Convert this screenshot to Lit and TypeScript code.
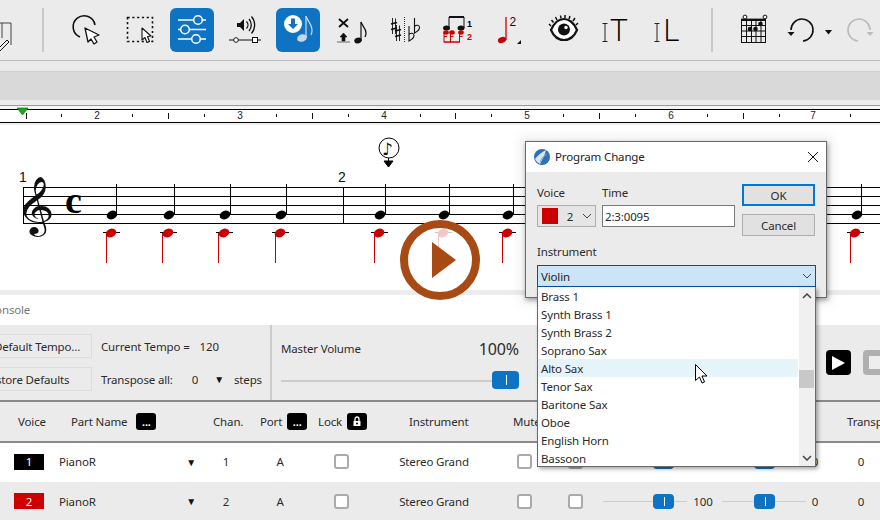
import { LitElement, html, css, svg } from "lit";
import { customElement } from "lit/decorators.js";

const B = "#0f73c3";
const ibeam = (x: number) => svg`<path d="M${x - 2.5} 15.5h5M${x - 2.5} 33.5h5M${x} 15.5v18" fill="none" stroke="#222" stroke-width="1"/>`;
const sharp = (x: number, y: number) => svg`<path d="M${x - 1.5} ${y - 8}v16M${x + 1.5} ${y - 7.500}v15.500" stroke="#111" stroke-width=".9"/><path d="M${x - 3} ${y - 2}l6-1.500M${x - 3} ${y + 3.500}l6-1.500" stroke="#111" stroke-width="1.800"/>`;
const flat = (x: number, y: number) => svg`<path d="M${x} ${y - 10}v15c3-1.500 5-3.500 5-5.500 0-2.500-3-3-5-1" fill="none" stroke="#111" stroke-width="1.100"/>`;

const icons = {
  clip: svg`<path d="M6 15H33V37M12 15V34M24 15V30" fill="none" stroke="#444" stroke-width="1"/><path d="M20 41l9-9 2 2-9 9-3 1z" fill="none" stroke="#111" stroke-width="1"/>`,
  cursor: svg`<path d="M16 29A11 11 0 1 1 31 17" fill="none" stroke="#111" stroke-width="1.6"/><path d="M21 20L35 27L30 29L33 34L30 36L27 31L24 34Z" fill="#fff" stroke="#111" stroke-width="1.3" stroke-linejoin="round"/>`,
  marquee: svg`<rect x="10.5" y="9.5" width="25" height="24" fill="none" stroke="#111" stroke-width="1.6" stroke-dasharray="2.2 2.6"/><path d="M25 20l9 8-3.500 .5 2 5-2.500 1-2-5-3 2.500z" fill="#fff" stroke="#111" stroke-width="1.1" stroke-linejoin="round"/>`,
  sliders: svg`<path d="M8 12H36M8 21.500H36M8 31H36" stroke="#fff" stroke-width="1.300"/><g fill="${B}" stroke="#fff" stroke-width="1.500"><circle cx="28" cy="12" r="4.300"/><circle cx="15" cy="21.500" r="4.300"/><circle cx="26" cy="31" r="4.300"/></g>`,
  speaker: svg`<path d="M14 15h3l4-4v12l-4-4h-3z" fill="#111"/><path d="M23.500 13.500a5 5 0 0 1 0 7M26 11a9 9 0 0 1 0 12M28.500 8.500a13 13 0 0 1 0 17" fill="none" stroke="#111" stroke-width="1.300"/><path d="M6 32H38" stroke="#111" stroke-width="1"/><circle cx="13" cy="32" r="2.300" fill="#fff" stroke="#111"/><rect x="29.500" y="29.500" width="5" height="5" fill="#fff" stroke="#111"/>`,
  noteIn: svg`<path d="M30 8v22" stroke="#c7d6e6" stroke-width="1.300"/><path d="M30 8c1 5 6 7 6 14 0 2-.5 4-1 5" fill="none" stroke="#c7d6e6" stroke-width="1.300"/><ellipse cx="26" cy="30" rx="5" ry="3.600" fill="#c7d6e6" transform="rotate(-20 26 30)"/><circle cx="17" cy="16" r="9" fill="#fff"/><path d="M15 10.500h4V16h3l-5 5-5-5h3z" fill="${B}"/>`,
  xnote: svg`<path d="M10 11l9 8M19 11l-9 8" stroke="#111" stroke-width="1.800"/><path d="M14.500 25l3.500 4h-2v4h-3v-4h-2zM8 34h13" fill="#111" stroke="#111" stroke-width=".6"/><path d="M32 14v19" stroke="#111" stroke-width="1.200"/><path d="M32 14c1 4 5 6 5 11 0 2-.5 3-1 4" fill="none" stroke="#111" stroke-width="1.300"/><ellipse cx="29" cy="32.500" rx="3.800" ry="2.800" fill="#111" transform="rotate(-20 29 32.500)"/>`,
  accid: svg`${sharp(12, 18)}${sharp(16, 25)}<path d="M22.500 9v26" stroke="#333" stroke-width="1" stroke-dasharray="1 1"/>${flat(27, 28)}${flat(32.5, 20)}`,
  voices: svg`<path d="M14 9v11M29 9v11" stroke="#111" stroke-width="1"/><path d="M14 9h15" stroke="#111" stroke-width="2"/><ellipse cx="11.500" cy="20" rx="3.500" ry="2.500" fill="#111"/><ellipse cx="26" cy="20" rx="3.500" ry="2.500" fill="#111"/><text x="32" y="19" class="b" font-size="9">1</text><g fill="#c00"><ellipse cx="11" cy="24.500" rx="2.800" ry="2.200"/><ellipse cx="17" cy="24.500" rx="2.800" ry="2.200"/><ellipse cx="26" cy="24.500" rx="2.800" ry="2.200"/></g><path d="M9 25v9.500M15.500 25v9.500M24.500 25v9.500" stroke="#c00" stroke-width="1"/><path d="M9 34H24.500" stroke="#c00" stroke-width="1.500"/><path d="M9 28.500h3M15.500 28.500h3M24.500 28.500h3" stroke="#c00" stroke-width="1"/><text x="32" y="32" class="b" font-size="9" fill="#c00">2</text>`,
  note2: svg`<path d="M18 9v23" stroke="#c00" stroke-width="1.300"/><ellipse cx="14" cy="32" rx="4.200" ry="3" fill="#c00" transform="rotate(-20 14 32)"/><text x="21.500" y="18" class="t" font-size="12">2</text><path d="M33 32v4h-4z" fill="#111"/>`,
  eye: svg`<path d="M10 22c4-9 9-11 13-11s10 3 13 11c-3 7-8 10-13 10s-10-3-13-10z" fill="#fff" stroke="#111" stroke-width="2.200"/><circle cx="23" cy="21.500" r="6" fill="#111"/><circle cx="25" cy="19.500" r="1.700" fill="#fff"/><path d="M10 18l-2-2M12.500 14.500l-2-2.500M16 12l-1.500-3M20 10.500l-.5-3M24 10v-3M28 11l1-3M32 13l2-3M35 17l2-2" stroke="#111" stroke-width="1.500"/>`,
  it: svg`${ibeam(11)}<text x="16.500" y="33" class="big" font-size="32">T</text>`,
  il: svg`${ibeam(10)}<text x="16" y="33" class="big" font-size="32">L</text>`,
  chord: svg`<g stroke="#111" stroke-width="1"><rect x="10.500" y="12.500" width="24" height="22" fill="none"/><path d="M10 11.500h25" stroke-width="1.800"/><path d="M15.500 12v22M20.500 12v22M25 12v22M30 12v22M10 17.500h25M10 23h25M10 28.500h25"/></g><circle cx="14" cy="9" r="1.900" fill="#fff" stroke="#111"/><circle cx="34" cy="9" r="1.900" fill="#fff" stroke="#111"/><g fill="#111"><circle cx="19" cy="21" r="2.300"/><circle cx="24.500" cy="21" r="2.300"/><circle cx="29.500" cy="16" r="2.300"/></g>`,
  undo: svg`<path d="M13 22A11 11 0 1 1 25 33" fill="none" stroke="#111" stroke-width="1.600"/><path d="M9.500 24h7l-3.500 4z" fill="#111"/>`,
  redo: svg`<path d="M31 22A11 11 0 1 0 19 33" fill="none" stroke="#bbb" stroke-width="1.600"/><path d="M27.500 24h7l-3.500 4z" fill="#bbb"/>`,
};

const ic = (p: unknown, w = 44, cls = "") => html`<div class="ic ${cls}"><svg width="${w}" height="44" viewBox="0 0 ${w} 44">${p}</svg></div>`;

const rulerTicks = [26, 168, 312, 455, 599, 743];
const labels: [number, string][] = [[97, "2"], [240, "3"], [384, "4"], [527, "5"], [671, "6"], [813, "7"]];
const shortTicks = [61, 132, 204, 276, 348, 420, 491, 563, 635, 707, 779, 850];

const blackNotes = [[112, 116], [169, 174], [225, 230], [281, 286], [380, 385], [444, 449], [508, 513], [857, 861]];
const redNotes = [[111, 106], [168, 162], [224, 218], [280, 275], [379, 374], [443, 438], [507, 502], [855, 850]];
const Y0 = 125;

const items = ["Brass 1", "Synth Brass 1", "Synth Brass 2", "Soprano Sax", "Alto Sax", "Tenor Sax", "Baritone Sax", "Oboe", "English Horn", "Bassoon"];

@customElement("app-root")
export class AppRoot extends LitElement {
  static styles = css`
    :host { display: block; position: relative; width: 880px; height: 520px; overflow: hidden; background: #ebebeb; font: 11.5px "Noto Sans", sans-serif; letter-spacing: -.15px; color: #2b2b2b; }
    svg { display: block; }
    .mus { font-family: "DejaVu Sans", sans-serif; fill: #111; }
    .b { font-family: "Liberation Sans", sans-serif; font-weight: 700; letter-spacing: 0; }
    .t { font-family: "Liberation Sans", sans-serif; fill: #111; letter-spacing: 0; }
    .big { font-family: "Open Sans", sans-serif; font-weight: 300; fill: #000; letter-spacing: 0; }
    .cee { font: 700 38px "Liberation Serif", serif; fill: #000; letter-spacing: 0; }
    .toolbar { height: 60px; border-bottom: 1px solid #bbb; display: flex; align-items: center; gap: 9px; margin-left: -22px; }
    .ic { height: 44px; flex: none; border-radius: 6px; }
    .ic.on { background: #0f73c3; }
    .sep { width: 2px; height: 44px; background: #c8c8c8; flex: none; margin: 0 11px; }
    .sep.r { margin-right: 9px; }
    .tight { margin-right: -6px; }
    .caret { margin-left: -6px; margin-right: -6px; }
    .gap71 { height: 10px; border-bottom: 1px solid #d0d0d0; }
    .band { height: 28px; background: #d9d9d9; display: flex; align-items: center; }
    .band span { margin-left: -5px; }
    .gap105 { height: 5px; border-bottom: 1px solid #999; }
    .pre { height: 3px; background: #f4f4f4; }
    .ruler { background: #fff; border-top: 1px solid #000; border-bottom: 1px solid #000; height: 12px; }
    .ruler svg { overflow: visible; }
    .ruler text { font: 10px "Liberation Sans", sans-serif; fill: #222; letter-spacing: 0; }
    .post { height: 2px; background: #f0f0f0; }
    .score { background: #fff; height: 165px; }
    .band2 { height: 5px; background: #ececec; }
    .tab { height: 28px; padding-bottom: 2px; background: #fff; display: flex; align-items: center; color: #777; }
    .tab span { margin-left: -12px; }
    .panel { height: 75px; display: flex; border-bottom: 2px solid #8a8a8a; }
    .left { width: 270px; flex: none; border-right: 2px solid #ccc; padding-top: 9px; display: flex; flex-direction: column; gap: 9px; overflow: hidden; }
    .lrow { display: flex; align-items: center; height: 24px; }
    .btn { width: 110px; height: 24px; margin-left: -18px; box-sizing: border-box; border: 1px solid #ddd; background: #ebebeb; display: flex; align-items: center; justify-content: center; flex: none; margin-right: 9px; white-space: nowrap; }
    .btn.wide { width: 132px; margin-left: -40px; }
    .num { margin-left: 10px; }
    .tz { margin-left: 19px; }
    .dn { margin-left: 16px; font-size: 10px; color: #111; }
    .steps { margin-left: 10px; }
    .master { width: 238px; flex: none; margin-left: 9px; padding-top: 9px; box-sizing: border-box; }
    .mtop { display: flex; justify-content: space-between; align-items: center; height: 28px; }
    .pct { font-size: 16px; padding-top: 2px; }
    .track { position: relative; height: 2px; background: #ccc; }
    .mtrack { margin-top: 18px; height: 2px; }
    .thumb { position: absolute; top: -8px; height: 18px; width: 27px; border-radius: 4px; background: #0f73c3; }
    .thumb::after { content: ""; position: absolute; left: 50%; top: 4px; bottom: 4px; width: 1px; background: #fff; }
    .mtrack .thumb { right: 0; top: -9px; }
    .col2 { width: 260px; flex: none; margin-left: 19px; padding-top: 9px; }
    .col2 .track { margin-top: 18px; width: 100px; }
    .col2 .thumb { left: 0; top: -9px; }
    .tbtn { width: 25px; height: 25px; border-radius: 4px; background: #000; margin-top: 25px; margin-left: 28px; flex: none; display: flex; align-items: center; justify-content: center; }
    .tbtn.off { background: #b0b0b0; margin-left: 12px; }
    .tbtn.off i { width: 13px; height: 13px; background: #eee; display: block; }
    .thead { height: 39px; display: flex; align-items: center; padding-left: 18px; border-bottom: 2px solid #8a8a8a; }
    .thead > div { flex: none; display: flex; align-items: center; gap: 5px; white-space: nowrap; }
    .h1 { width: 53px; } .thead .h2 { width: 142px; gap: 9px; } .h3 { width: 47px; } .h4 { width: 58px; } .h5 { width: 91px; } .h6 { width: 104px; } .h7 { width: 334px; }
    .dots { width: 20px; height: 17px; border-radius: 3px; background: #000; color: #fff; font: 700 11px/12px "Liberation Sans", sans-serif; display: flex; align-items: center; justify-content: center; }
    .row { height: 37px; padding-bottom: 2px; display: grid; grid-template-columns: 45px 147px 40px 68px 54px 132px 48px 54px 86px 30px 92px 10px 82px; padding-left: 14px; align-items: center; justify-items: center; background: #fff; }
    .row.alt { background: #ebebeb; height: 38px; }
    .chip { justify-self: start; width: 30px; height: 16px; color: #fff; background: #000; display: flex; align-items: center; justify-content: center; }
    .chip.red { background: #c00; }
    .name { justify-self: stretch; display: flex; justify-content: space-between; align-items: center; padding-right: 10px; }
    .name i { font-style: normal; font-size: 10px; color: #111; }
    .cb { width: 15px; height: 15px; box-sizing: border-box; border: 2px solid #aaa; border-radius: 3px; background: #fff; }
    .row .track { width: 84px; height: 1px; background: #ccc; }
    .row .thumb { top: -7px; height: 15px; width: 21px; }
    .row .thumb::after { top: 3px; bottom: 3px; }
    .row .vol { left: 50px; }
    .row .pan { left: 32px; }
    .dlg { position: absolute; left: 525px; top: 141px; width: 302px; height: 157px; box-sizing: border-box; border: 1px solid #6a6a6a; background: #ebebeb; box-shadow: 1px 2px 5px rgba(0,0,0,.4), 0 0 10px 7px rgba(0,0,0,.045); }
    .title { height: 29px; padding-bottom: 1px; background: #fff; display: flex; align-items: center; padding-left: 8px; gap: 5px; }
    .title span { flex: 1; color: #222; }
    .title .x { margin-right: 7px; }
    .dbody { display: grid; grid-template-columns: 59px 133px; column-gap: 6px; position: relative; padding: 9px 0 0 11px; grid-template-rows: 24px 22px; align-items: center; }
    .dlabel { padding-bottom: 2px; }
    .combo { box-sizing: border-box; height: 22px; border: 1px solid #adadad; background: #e5e5e5; display: flex; align-items: center; padding-left: 4px; justify-content: space-between; padding-right: 3px; }
    .combo b { width: 16px; height: 16px; background: #c00; display: block; }
    .input { box-sizing: border-box; height: 22px; border: 1px solid #7a7a7a; background: #fff; padding-left: 2px; display: flex; align-items: center; }
    .dbtns { position: absolute; left: 216px; top: 12px; display: flex; flex-direction: column; gap: 8px; }
    .dbtn { width: 73px; height: 22px; box-sizing: border-box; border: 1px solid #adadad; background: #e1e1e1; display: flex; align-items: center; justify-content: center; }
    .dbtn.def { border: 2px solid #0078d7; }
    .ilabel { margin: 16px 0 0 11px; height: 17px; line-height: 17px; }
    .select { margin: 5px 0 0 11px; box-sizing: border-box; width: 279px; height: 22px; border: 1px solid #005499; background: #cce4f7; display: flex; align-items: center; justify-content: space-between; padding: 0 3px 0 3px; color: #222; }
    .list { position: absolute; left: 537px; top: 287px; width: 279px; height: 180px; box-sizing: border-box; border: 1px solid #6a6a6a; border-top: none; background: #fff; box-shadow: 2px 2px 4px rgba(0,0,0,.35); display: flex; overflow: hidden; }
    .opts { flex: 1; }
    .opt { height: 18px; line-height: 20px; padding-left: 3px; color: #2a2a2a; margin-right: 1px; }
    .opt.hi { background: #e5f3fb; }
    .sb { width: 16px; background: #f0f0f0; position: relative; flex: none; }
    .sb svg { position: absolute; left: 3px; }
    .sb .up { top: 6px; }
    .sb .down { bottom: 5px; }
    .sb i { position: absolute; left: 0; right: 1px; top: 83px; height: 18px; background: #c8c8c8; display: block; }
    .mouse { position: absolute; left: 695px; top: 364px; }
    .play { position: absolute; left: 400px; top: 220px; }
  `;

  row(n: string, alt: boolean) {
    return html`<div class="row ${alt ? "alt" : ""}">
      <div class="chip ${alt ? "red" : ""}">${n}</div>
      <div class="name"><span>PianoR</span><i>▼</i></div>
      <div>${n}</div><div>A</div><div class="cb"></div><div>Stereo Grand</div><div class="cb"></div><div class="cb"></div>
      <div class="track"><div class="thumb vol"></div></div><div>100</div>
      <div class="track"><div class="thumb pan"></div></div><div>0</div><div>0</div>
    </div>`;
  }

  render() {
    const chev = svg`<path d="M1 1l4 4 4-4" fill="none" stroke="#444" stroke-width="1"/>`;
    return html`
      <div class="toolbar">
        ${ic(icons.clip)}
        <div class="sep"></div>
        ${ic(icons.cursor)}${ic(icons.marquee)}${ic(icons.sliders, 44, "on")}${ic(icons.speaker)}${ic(icons.noteIn, 44, "on")}${ic(icons.xnote)}${ic(icons.accid)}${ic(icons.voices)}${ic(icons.note2)}${ic(icons.eye)}${ic(icons.it)}${ic(icons.il)}
        <div class="sep r"></div>
        ${ic(icons.chord, 44, "tight")}${ic(icons.undo)}
        ${ic(svg`<path d="M0 22h7l-3.500 4.500z" fill="#111"/>`, 11, "caret")}
        ${ic(icons.redo)}
      </div>
      <div class="gap71"></div>
      <div class="band"><span>1</span></div>
      <div class="gap105"></div>
      <div class="pre"></div>
      <div class="ruler">
        <svg width="880" height="12" viewBox="0 110 880 12">
          ${rulerTicks.map((x) => svg`<path d="M${x}.5 113v6" stroke="#111"/>`)}
          ${shortTicks.map((x) => svg`<path d="M${x}.5 114v3" stroke="#111"/>`)}
          ${labels.map(([x, t]) => svg`<text x="${x}" y="119" text-anchor="middle">${t}</text>`)}
          <path d="M17 108h11l-5.500 7z" fill="#1aa81a" stroke="#0a6a0a" stroke-width=".6"/>
        </svg>
      </div>
      <div class="post"></div>
      <div class="score">
        <svg width="880" height="165" viewBox="0 ${Y0} 880 165">
          <g stroke="#000" stroke-width="1">
            ${[187, 196, 205, 214, 223].map((y) => svg`<path d="M23 ${y}.5H880"/>`)}
            <path d="M23.500 187v37M343.500 187v37"/>
          </g>
          <text x="19" y="182" class="t" font-size="14">1</text>
          <text x="338" y="182" class="t" font-size="14">2</text>
          <text transform="translate(15 222) scale(1.35 1)" class="mus" font-size="50">𝄞</text>
          <text x="65" y="213" class="cee">c</text>
          ${blackNotes.map(([h, s]) => svg`<ellipse cx="${h}" cy="215" rx="5.500" ry="4.200" fill="#000" transform="rotate(-25 ${h} 215)"/><path d="M${s}.5 184v31" stroke="#000" stroke-width="1"/>`)}
          ${redNotes.map(([h, s]) => svg`<path d="M${h - 8} 232.500h17" stroke="#000"/><ellipse cx="${h}" cy="233" rx="5.500" ry="4.200" fill="#c00" transform="rotate(-25 ${h} 233)"/><path d="M${s}.5 233v30" stroke="#c00" stroke-width="1"/>`)}
          <circle cx="389" cy="148" r="10" fill="#fff" stroke="#000" stroke-width="1"/>
          <text x="382" y="155" class="mus" font-size="17">♪</text>
          <path d="M388.500 158v3M384 161h9l-4.500 6z" fill="#000" stroke="#000" stroke-width="1"/>
        </svg>
      </div>
      <div class="band2"></div>
      <div class="tab"><span>Console</span></div>
      <div class="panel">
        <div class="left">
          <div class="lrow"><div class="btn">Default Tempo...</div><span>Current Tempo =</span><span class="num">120</span></div>
          <div class="lrow"><div class="btn wide">Restore Defaults</div><span>Transpose all:</span><span class="tz">0</span><span class="dn">▼</span><span class="steps">steps</span></div>
        </div>
        <div class="master">
          <div class="mtop"><span>Master Volume</span><span class="pct">100%</span></div>
          <div class="track mtrack"><div class="thumb"></div></div>
        </div>
        <div class="col2"><div class="mtop"><span>Metronome</span></div><div class="track"><div class="thumb"></div></div></div>
        <div class="tbtn"><svg width="13" height="14"><path d="M0 0l13 7-13 7z" fill="#fff"/></svg></div>
        <div class="tbtn off"><i></i></div>
      </div>
      <div class="thead">
        <div class="h1">Voice</div>
        <div class="h2">Part Name <span class="dots">...</span></div>
        <div class="h3">Chan.</div>
        <div class="h4">Port <span class="dots">...</span></div>
        <div class="h5">Lock <span class="dots"><svg width="10" height="11"><path d="M3 5V3a2 2 0 0 1 4 0v2" fill="none" stroke="#fff" stroke-width="1.300"/><rect x="1.500" y="5" width="7" height="5" rx=".5" fill="#fff"/><circle cx="5" cy="7.500" r="1" fill="#000"/></svg></span></div>
        <div class="h6">Instrument</div>
        <div class="h7">Mute</div>
        <div>Transp</div>
      </div>
      ${this.row("1", false)}
      ${this.row("2", true)}

      <svg class="play" width="80" height="80" viewBox="0 0 80 80">
        <circle cx="40" cy="40" r="36" fill="rgba(255,255,255,.78)" stroke="#a84a14" stroke-width="8"/>
        <path d="M32 22l24 18-24 18z" fill="#a84a14"/>
      </svg>

      <div class="dlg">
        <div class="title">
          <svg width="16" height="16" viewBox="0 0 16 16"><circle cx="8" cy="8" r="8" fill="#2f6fb5"/><path d="M1 10C4 6 8 3 12 1c-1 5-4 10-6 14-2-1-4-3-5-5z" fill="#dbe6f3"/><path d="M8 9l5-4M6 13l2-4" stroke="#7ea3cd"/></svg>
          <span>Program Change</span>
          <svg class="x" width="12" height="12" viewBox="0 0 12 12"><path d="M1 1l10 10M11 1L1 11" stroke="#111" stroke-width="1"/></svg>
        </div>
        <div class="dbody">
          <div class="dlabel">Voice</div><div class="dlabel">Time</div>
          <div class="combo"><b></b><span>2</span><svg width="10" height="6">${chev}</svg></div>
          <div class="input">2:3:0095</div>
          <div class="dbtns"><div class="dbtn def">OK</div><div class="dbtn">Cancel</div></div>
        </div>
        <div class="ilabel">Instrument</div>
        <div class="select"><span>Violin</span><svg width="10" height="6">${chev}</svg></div>
      </div>
      <div class="list">
        <div class="opts">${items.map((t) => html`<div class="opt ${t === "Alto Sax" ? "hi" : ""}">${t}</div>`)}</div>
        <div class="sb">
          <svg class="up" width="10" height="6"><path d="M1 5l4-4 4 4" fill="none" stroke="#444" stroke-width="1.500"/></svg>
          <i></i>
          <svg class="down" width="10" height="6"><path d="M1 1l4 4 4-4" fill="none" stroke="#444" stroke-width="1.500"/></svg>
        </div>
      </div>
      <svg class="mouse" width="13" height="21" viewBox="0 0 13 21"><path d="M.5 .5v16l4-3.500 2.500 6 2.500-1-2.500-6h5z" fill="#fff" stroke="#000" stroke-width="1"/></svg>
    `;
  }
}
